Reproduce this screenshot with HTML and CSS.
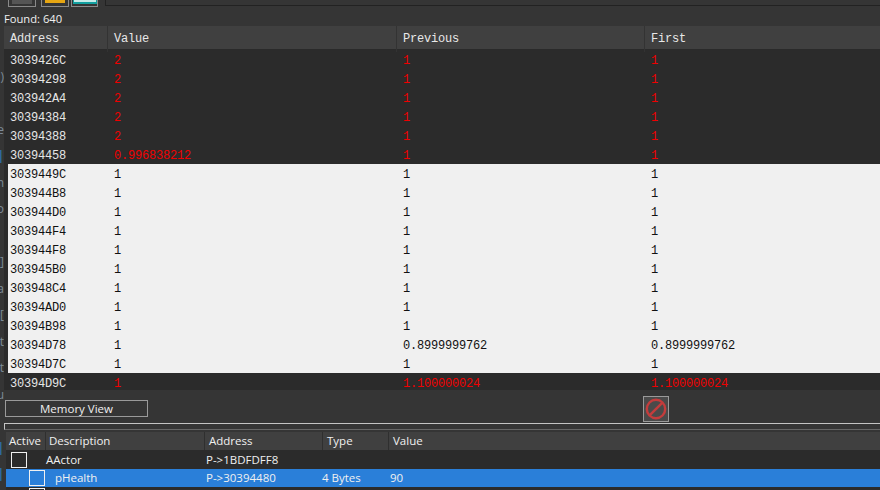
FILE: index.html
```html
<!DOCTYPE html>
<html lang="en">
<head>
<meta charset="utf-8">
<title>Scan results</title>
<link rel="stylesheet" href="styles.css">
</head>
<body>
<div class="window">
  <div class="gutter" aria-hidden="true">
    <span></span><span></span><span></span><span><b>)</b></span><span></span><span><b>e</b></span><span><b class="accent">|</b></span><span><b>n</b></span><span><b>o</b></span><span></span><span><b>]</b></span><span><b>a</b></span><span><b>[</b></span><span><b>t</b></span><span><b>t</b></span><span><b>u</b></span><span></span><span><b class="accent">|</b></span><span><b class="accent">|</b></span>
  </div>
  <div class="toolbar">
    <div class="tool tool-gray"><span class="glyph"></span></div>
    <div class="tool tool-gold"><span class="glyph"></span></div>
    <div class="tool tool-teal"><span class="glyph"></span></div>
    <div class="tool-field"></div>
  </div>
  <div class="found">Found: 640</div>
  <div class="results">
    <div class="row head"><span>Address</span><span>Value</span><span>Previous</span><span>First</span></div>
    <div class="row changed"><span>3039426C</span><span>2</span><span>1</span><span>1</span></div>
    <div class="row changed"><span>30394298</span><span>2</span><span>1</span><span>1</span></div>
    <div class="row changed"><span>303942A4</span><span>2</span><span>1</span><span>1</span></div>
    <div class="row changed"><span>30394384</span><span>2</span><span>1</span><span>1</span></div>
    <div class="row changed"><span>30394388</span><span>2</span><span>1</span><span>1</span></div>
    <div class="row changed"><span>30394458</span><span>0.996838212</span><span>1</span><span>1</span></div>
    <div class="row same"><span>3039449C</span><span>1</span><span>1</span><span>1</span></div>
    <div class="row same"><span>303944B8</span><span>1</span><span>1</span><span>1</span></div>
    <div class="row same"><span>303944D0</span><span>1</span><span>1</span><span>1</span></div>
    <div class="row same"><span>303944F4</span><span>1</span><span>1</span><span>1</span></div>
    <div class="row same"><span>303944F8</span><span>1</span><span>1</span><span>1</span></div>
    <div class="row same"><span>303945B0</span><span>1</span><span>1</span><span>1</span></div>
    <div class="row same"><span>303948C4</span><span>1</span><span>1</span><span>1</span></div>
    <div class="row same"><span>30394AD0</span><span>1</span><span>1</span><span>1</span></div>
    <div class="row same"><span>30394B98</span><span>1</span><span>1</span><span>1</span></div>
    <div class="row same"><span>30394D78</span><span>1</span><span>0.8999999762</span><span>0.8999999762</span></div>
    <div class="row same"><span>30394D7C</span><span>1</span><span>1</span><span>1</span></div>
    <div class="row changed last"><span>30394D9C</span><span>1</span><span>1.100000024</span><span>1.100000024</span></div>
  </div>
  <div class="actions">
    <button class="memory">Memory View</button>
    <button class="stop" aria-label="Stop">
      <svg width="22" height="22" viewBox="0 0 22 22"><circle cx="11" cy="11" r="9.2" fill="none" stroke="#c43c3c" stroke-width="2.4"/><path d="M4.8 17.2 17.2 4.8" stroke="#c43c3c" stroke-width="2.4"/></svg>
    </button>
  </div>
  <div class="splitter"></div>
  <div class="table">
    <div class="trow thead"><span>Active</span><span>Description</span><span>Address</span><span>Type</span><span>Value</span></div>
    <div class="trow"><span class="check-cell"><i class="check"></i></span><span>AActor</span><span>P-&gt;1BDFDFF8</span><span></span><span></span></div>
    <div class="trow selected"><span class="check-cell"><i class="check nested"></i></span><span>pHealth</span><span>P-&gt;30394480</span><span>4 Bytes</span><span>90</span></div>
    <div class="trow"><span class="check-cell"><i class="check nested"></i></span><span></span><span></span><span></span><span></span></div>
  </div>
</div>
</body>
</html>
```
FILE: styles.css
```css
html, body { margin: 0; padding: 0; }
body { width: 880px; height: 490px; overflow: hidden; background: #353535; }
.window { position: relative; width: 880px; height: 490px; overflow: hidden; font-family: "Open Sans", "Noto Sans", sans-serif; font-size: 11.5px; color: #f0f0f0; }

.gutter { position: absolute; left: 0; top: -16px; width: 4px; overflow: hidden; font-size: 12px; color: #7d8b98; }
.gutter span { display: flex; justify-content: flex-end; height: 26.5px; line-height: 26.5px; }
.gutter b { font-weight: 400; flex: none; }
.gutter .accent { color: #2f6ea8; font-weight: 700; }

.toolbar { display: flex; height: 7px; box-sizing: border-box; align-items: flex-end; padding-left: 8px; overflow: hidden; }
.tool { flex: none; height: 7px; box-sizing: border-box; border: 1px solid #8a8a8a; border-top: 0; display: flex; justify-content: center; }
.tool-gray { width: 28px; margin-right: 5px; }
.tool-gold { width: 28px; margin-right: 2px; }
.tool-teal { width: 27px; margin-right: 7px; }
.glyph { display: block; }
.tool-gray .glyph { width: 20px; height: 4px; background: #555; }
.tool-gold .glyph { width: 20px; height: 3px; background: #e6a612; }
.tool-teal .glyph { width: 24px; height: 4px; background: #c8ecea; border: solid #12a0a0; border-width: 0 1px 2px; box-sizing: border-box; }
.tool-field { flex: 1; height: 6px; border-left: 1px solid #222; border-bottom: 1px solid #222; margin-bottom: 1px; }

.found { height: 19px; line-height: 23px; padding-left: 4px; box-sizing: border-box; font-size: 11.2px; }

.results { margin-left: 4px; height: 364px; overflow: hidden; background: #2b2b2b; font-family: "Liberation Mono", monospace; font-size: 12px; letter-spacing: -0.2px; }
.row { display: grid; grid-template-columns: 103px 289px 248px 1fr; height: 19px; line-height: 22px; box-sizing: border-box; }
.row span { padding-left: 7px; white-space: nowrap; }
.row span:first-child { padding-left: 6px; color: #e6e6e6; }
.head { height: 24px; line-height: 26px; background: #404040; border-bottom: 1px solid #2a2a2a; }
.head span { color: #e8e8e8; }
.head span + span { border-left: 1px solid #333; padding-left: 6px; }
.changed span { color: #f00000; }
.same { margin-left: 4px; grid-template-columns: 99px 289px 248px 1fr; background: #f0f0f0; }
.same span, .same span:first-child { color: #111; }
.same span:first-child { padding-left: 2px; }
.last { height: 17px; }

.actions { display: flex; align-items: flex-start; justify-content: space-between; height: 33px; padding: 0 211px 0 5px; box-sizing: border-box; }
.memory { width: 143px; height: 17px; margin-top: 10px; padding: 0; background: #353535; color: #f0f0f0; border: 1px solid #9a9a9a; font: inherit; line-height: 16px; }
.stop { width: 26px; height: 26px; margin-top: 6px; padding: 0; display: flex; align-items: center; justify-content: center; background: #4a4a4a; border: 1px solid #9a9a9a; }

.splitter { height: 7px; margin-left: 4px; box-sizing: border-box; border-top: 1px solid #c4c4c4; border-left: 1px solid #c4c4c4; border-bottom: 1px solid #666; }

.table { margin: 2px 0 0 6px; background: #2b2b2b; height: 58px; overflow: hidden; }
.trow { display: grid; grid-template-columns: 39px 159px 118px 66px 1fr; height: 19px; line-height: 20px; box-sizing: border-box; }
.trow span { padding-left: 2px; white-space: nowrap; }
.trow span:first-child { overflow: hidden; }
.trow span:nth-child(2) { padding-left: 1px; }
.selected span:nth-child(2) { padding-left: 10px; }
.trow span:nth-child(4) { padding-left: 0; }
.thead { height: 18px; line-height: 18px; background: #404040; }
.thead span:nth-child(n) { padding-left: 3px; }
.thead span + span { border-left: 1px solid #2f2f2f; }
.thead span:nth-child(n+3) { padding-left: 4px; }
.selected { background: #2a7fd9; height: 18px; line-height: 18px; }
.check { display: block; width: 14px; height: 14px; border: 1px solid #f0f0f0; margin: 2px 0 0 3px; }
.nested { margin: 1px 0 0 21px; }
```
